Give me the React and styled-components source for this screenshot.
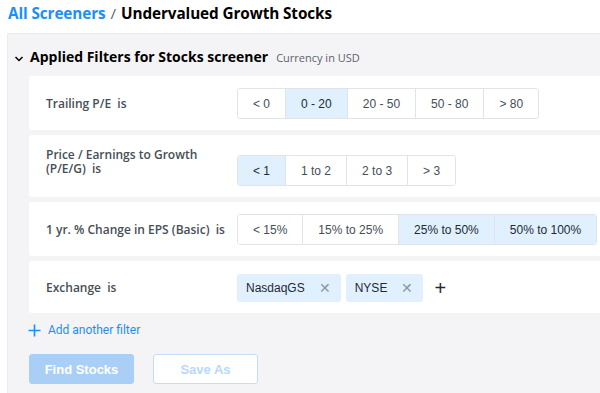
import React from 'react';
import styled, { createGlobalStyle } from 'styled-components';

const GlobalStyle = createGlobalStyle`
    body {
        margin: 0;
        background: #fff;
        font-family: "Open Sans", "Liberation Sans", sans-serif;
        overflow: hidden;
    }
`;

const Page = styled.div`
    padding: 3px 0 0 8px;
`;

const Title = styled.h1`
    margin: 0;
    height: 24px;
    font-size: 15.3px;
    font-weight: 700;
    color: #000;
    letter-spacing: -0.1px;
`;

const Crumb = styled.span`
    color: #188fff;
`;

const Slash = styled.span`
    color: #5b636a;
    margin: 0 5px;
    font-weight: 400;
`;

const Panel = styled.div`
    margin: 6px 0 0 -1px;
    width: 640px;
    height: 380px;
    background: #f4f4f6;
    border-top: 1px solid #ebebee;
    border-left: 1px solid #ebebee;
    border-radius: 2px 0 0 0;
    padding: 13px 0 0 6px;
    box-sizing: border-box;
`;

const PanelHeader = styled.div`
    display: flex;
    align-items: baseline;
    height: 24px;
`;

const Chevron = styled.svg`
    width: 10px;
    height: 10px;
    margin-right: 6px;
    align-self: center;
`;

const HeaderText = styled.span`
    font-size: 14px;
    font-weight: 700;
    color: #000;
`;

const Currency = styled.span`
    font-size: 11px;
    color: #5b636a;
    margin-left: 8px;
`;

const Rows = styled.div`
    display: flex;
    flex-direction: column;
    gap: 5px;
    margin: 5px 0 0 15px;
`;

const Card = styled.div`
    display: flex;
    align-items: ${p => (p.$tall ? 'flex-end' : 'center')};
    height: ${p => p.$h || 54}px;
    box-sizing: border-box;
    background: #fff;
    border-radius: 3px;
    padding: 12px 0 11px 17px;
`;

const Label = styled.div`
    width: 191px;
    flex-shrink: 0;
    align-self: ${p => (p.$tall ? 'flex-start' : 'auto')};
    margin-top: ${p => (p.$tall ? 1 : 0)}px;
    font-size: 12px;
    font-weight: 600;
    line-height: ${p => (p.$tall ? 14 : 16)}px;
    color: #464e56;
    white-space: pre-wrap;
`;

const Group = styled.div`
    display: flex;
    border: 1px solid #e0e4e9;
    border-radius: 3px;
    overflow: hidden;
`;

const Opt = styled.button`
    height: 29px;
    padding: 0 15px;
    border: none;
    border-left: ${p => (p.$first ? 'none' : '1px solid #e0e4e9')};
    background: ${p => (p.$on ? '#e0f0ff' : '#fff')};
    color: ${p => (p.$on ? '#232a31' : '#464e56')};
    font-family: "Liberation Sans", Arial, sans-serif;
    font-size: 12px;
    white-space: nowrap;
`;

const Chips = styled.div`
    display: flex;
    align-items: center;
    gap: 5px;
    margin-top: 1px;
`;

const Chip = styled.div`
    display: flex;
    align-items: center;
    height: 28px;
    padding: 0 10px 0 9px;
    background: #e0f0ff;
    border-radius: 3px;
    font-family: "Liberation Sans", Arial, sans-serif;
    font-size: 12px;
    color: #232a31;
`;

const Close = styled.span`
    margin-left: 14px;
    color: #8f969c;
    font-size: 14px;
`;

const AddBtn = styled.span`
    margin-left: 6px;
    font-family: "Liberation Sans", Arial, sans-serif;
    font-size: 20px;
    font-weight: 300;
    color: #232a31;
`;

const AddFilter = styled.div`
    display: flex;
    align-items: center;
    gap: 7px;
    margin: 8px 0 0 14px;
    height: 18px;
    font-family: Roboto, "Liberation Sans", sans-serif;
    font-size: 12px;
    color: #188fff;
`;

const Actions = styled.div`
    display: flex;
    gap: 19px;
    margin: 15px 0 0 15px;
`;

const Btn = styled.button`
    width: 105px;
    height: 30px;
    border-radius: 3px;
    font-family: "Liberation Sans", Arial, sans-serif;
    font-size: 13px;
    font-weight: 700;
    background: ${p => (p.$primary ? '#a9cff6' : '#fff')};
    color: ${p => (p.$primary ? '#fff' : '#b9d8f8')};
    border: 1px solid ${p => (p.$primary ? '#a9cff6' : '#c2defb')};
`;

const filters = [
    { label: 'Trailing P/E  is', options: ['< 0', '0 - 20', '20 - 50', '50 - 80', '> 80'], on: [1] },
    { label: 'Price / Earnings to Growth\n(P/E/G)  is', options: ['< 1', '1 to 2', '2 to 3', '> 3'], on: [0], h: 62, tall: true },
    { label: '1 yr. % Change in EPS (Basic)  is', options: ['< 15%', '15% to 25%', '25% to 50%', '50% to 100%'], on: [2, 3] },
];

function App() {
    return (
        <Page>
            <GlobalStyle />
            <Title>
                <Crumb>All Screeners</Crumb>
                <Slash>/</Slash>
                Undervalued Growth Stocks
            </Title>
            <Panel>
                <PanelHeader>
                    <Chevron viewBox="0 0 10 10">
                        <path d="M1.5 3l3.5 3.5L8.5 3" fill="none" stroke="#000" strokeWidth="1.5" />
                    </Chevron>
                    <HeaderText>Applied Filters for Stocks screener</HeaderText>
                    <Currency>Currency in USD</Currency>
                </PanelHeader>
                <Rows>
                    {filters.map(f => (
                        <Card key={f.label} $h={f.h} $tall={f.tall}>
                            <Label $tall={f.tall}>{f.label}</Label>
                            <Group>
                                {f.options.map((o, i) => (
                                    <Opt key={o} $first={i === 0} $on={f.on.includes(i)}>{o}</Opt>
                                ))}
                            </Group>
                        </Card>
                    ))}
                    <Card $h={52}>
                        <Label>Exchange  is</Label>
                        <Chips>
                            <Chip>NasdaqGS<Close>✕</Close></Chip>
                            <Chip>NYSE<Close>✕</Close></Chip>
                            <AddBtn>+</AddBtn>
                        </Chips>
                    </Card>
                </Rows>
                <AddFilter>
                    <svg width="13" height="13" viewBox="0 0 13 13">
                        <path d="M6.5 0.5v12M0.5 6.5h12" stroke="#188fff" strokeWidth="1.6" />
                    </svg>
                    Add another filter
                </AddFilter>
                <Actions>
                    <Btn $primary>Find Stocks</Btn>
                    <Btn>Save As</Btn>
                </Actions>
            </Panel>
        </Page>
    );
}

export default App;
